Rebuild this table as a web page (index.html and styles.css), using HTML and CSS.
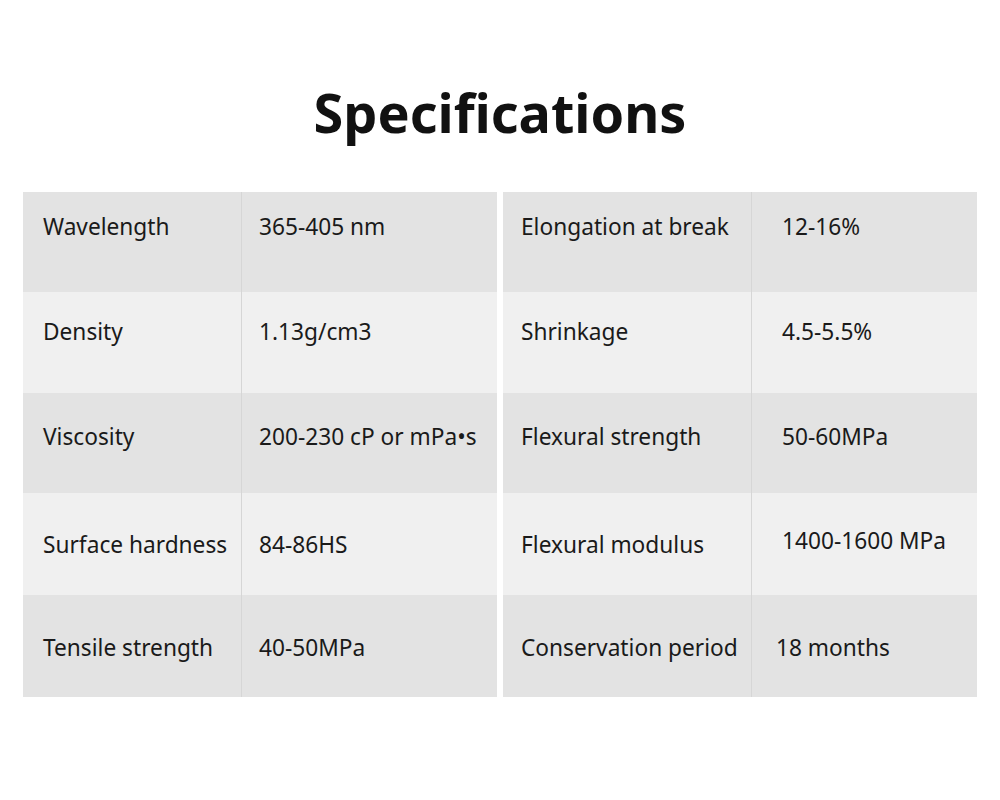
FILE: index.html
```html
<!DOCTYPE html>
<html lang="en">
<head>
<meta charset="utf-8">
<title>Specifications</title>
<link rel="stylesheet" href="styles.css">
</head>
<body>
<main class="page">
  <h1 class="title">Specifications</h1>
  <section class="specs">
    <div class="block block-left">
      <div class="row dark r1"><div class="label">Wavelength</div><div class="value">365-405 nm</div></div>
      <div class="row light r2"><div class="label">Density</div><div class="value">1.13g/cm3</div></div>
      <div class="row dark r3"><div class="label">Viscosity</div><div class="value">200-230 cP or mPa•s</div></div>
      <div class="row light r4"><div class="label">Surface hardness</div><div class="value">84-86HS</div></div>
      <div class="row dark r5"><div class="label">Tensile strength</div><div class="value">40-50MPa</div></div>
    </div>
    <div class="block block-right">
      <div class="row dark r1"><div class="label">Elongation at break</div><div class="value">12-16%</div></div>
      <div class="row light r2"><div class="label">Shrinkage</div><div class="value">4.5-5.5%</div></div>
      <div class="row dark r3"><div class="label">Flexural strength</div><div class="value">50-60MPa</div></div>
      <div class="row light r4"><div class="label">Flexural modulus</div><div class="value up">1400-1600 MPa</div></div>
      <div class="row dark r5"><div class="label">Conservation period</div><div class="value left">18 months</div></div>
    </div>
  </section>
</main>
</body>
</html>
```
FILE: styles.css
```css
* { box-sizing: border-box; }
html, body { margin: 0; padding: 0; background: #ffffff; }
body {
  font-family: "Noto Sans", "Open Sans", "DejaVu Sans", sans-serif;
  color: #1a1a1a;
  width: 1000px;
  height: 800px;
}
.page { padding-top: 72px; }
.title {
  margin: 0;
  text-align: center;
  font-size: 54px;
  font-weight: 700;
  line-height: 80px;
  color: #111111;
}
.specs {
  margin: 40px 23px 0 23px;
  display: grid;
  grid-template-columns: 474px 474px;
  column-gap: 6px;
}
.block { display: flex; flex-direction: column; }
.row {
  display: grid;
  font-size: 22.7px;
  line-height: 30px;
}
.block-left .row { grid-template-columns: 218px 1fr; }
.block-right .row { grid-template-columns: 248px 1fr; }
.row.dark { background: #e3e3e3; }
.row.light { background: #f0f0f0; }
.r1 { height: 100px; }
.r2 { height: 101px; }
.r3 { height: 100px; }
.r4 { height: 102px; }
.r5 { height: 102px; }
.label, .value { white-space: nowrap; }
.value { border-left: 1px solid #d6d6d6; }
.block-left .label { padding-left: 20px; }
.block-left .value { padding-left: 17px; }
.block-right .label { padding-left: 18px; }
.block-right .value { padding-left: 30px; }
.block-right .value.left { padding-left: 24px; }
.r1 .label, .r1 .value { padding-top: 20px; }
.r2 .label, .r2 .value { padding-top: 25px; }
.r3 .label, .r3 .value { padding-top: 29px; }
.r4 .label, .r4 .value { padding-top: 37px; }
.r4 .value.up { padding-top: 33px; }
.r5 .label, .r5 .value { padding-top: 38px; }
```
